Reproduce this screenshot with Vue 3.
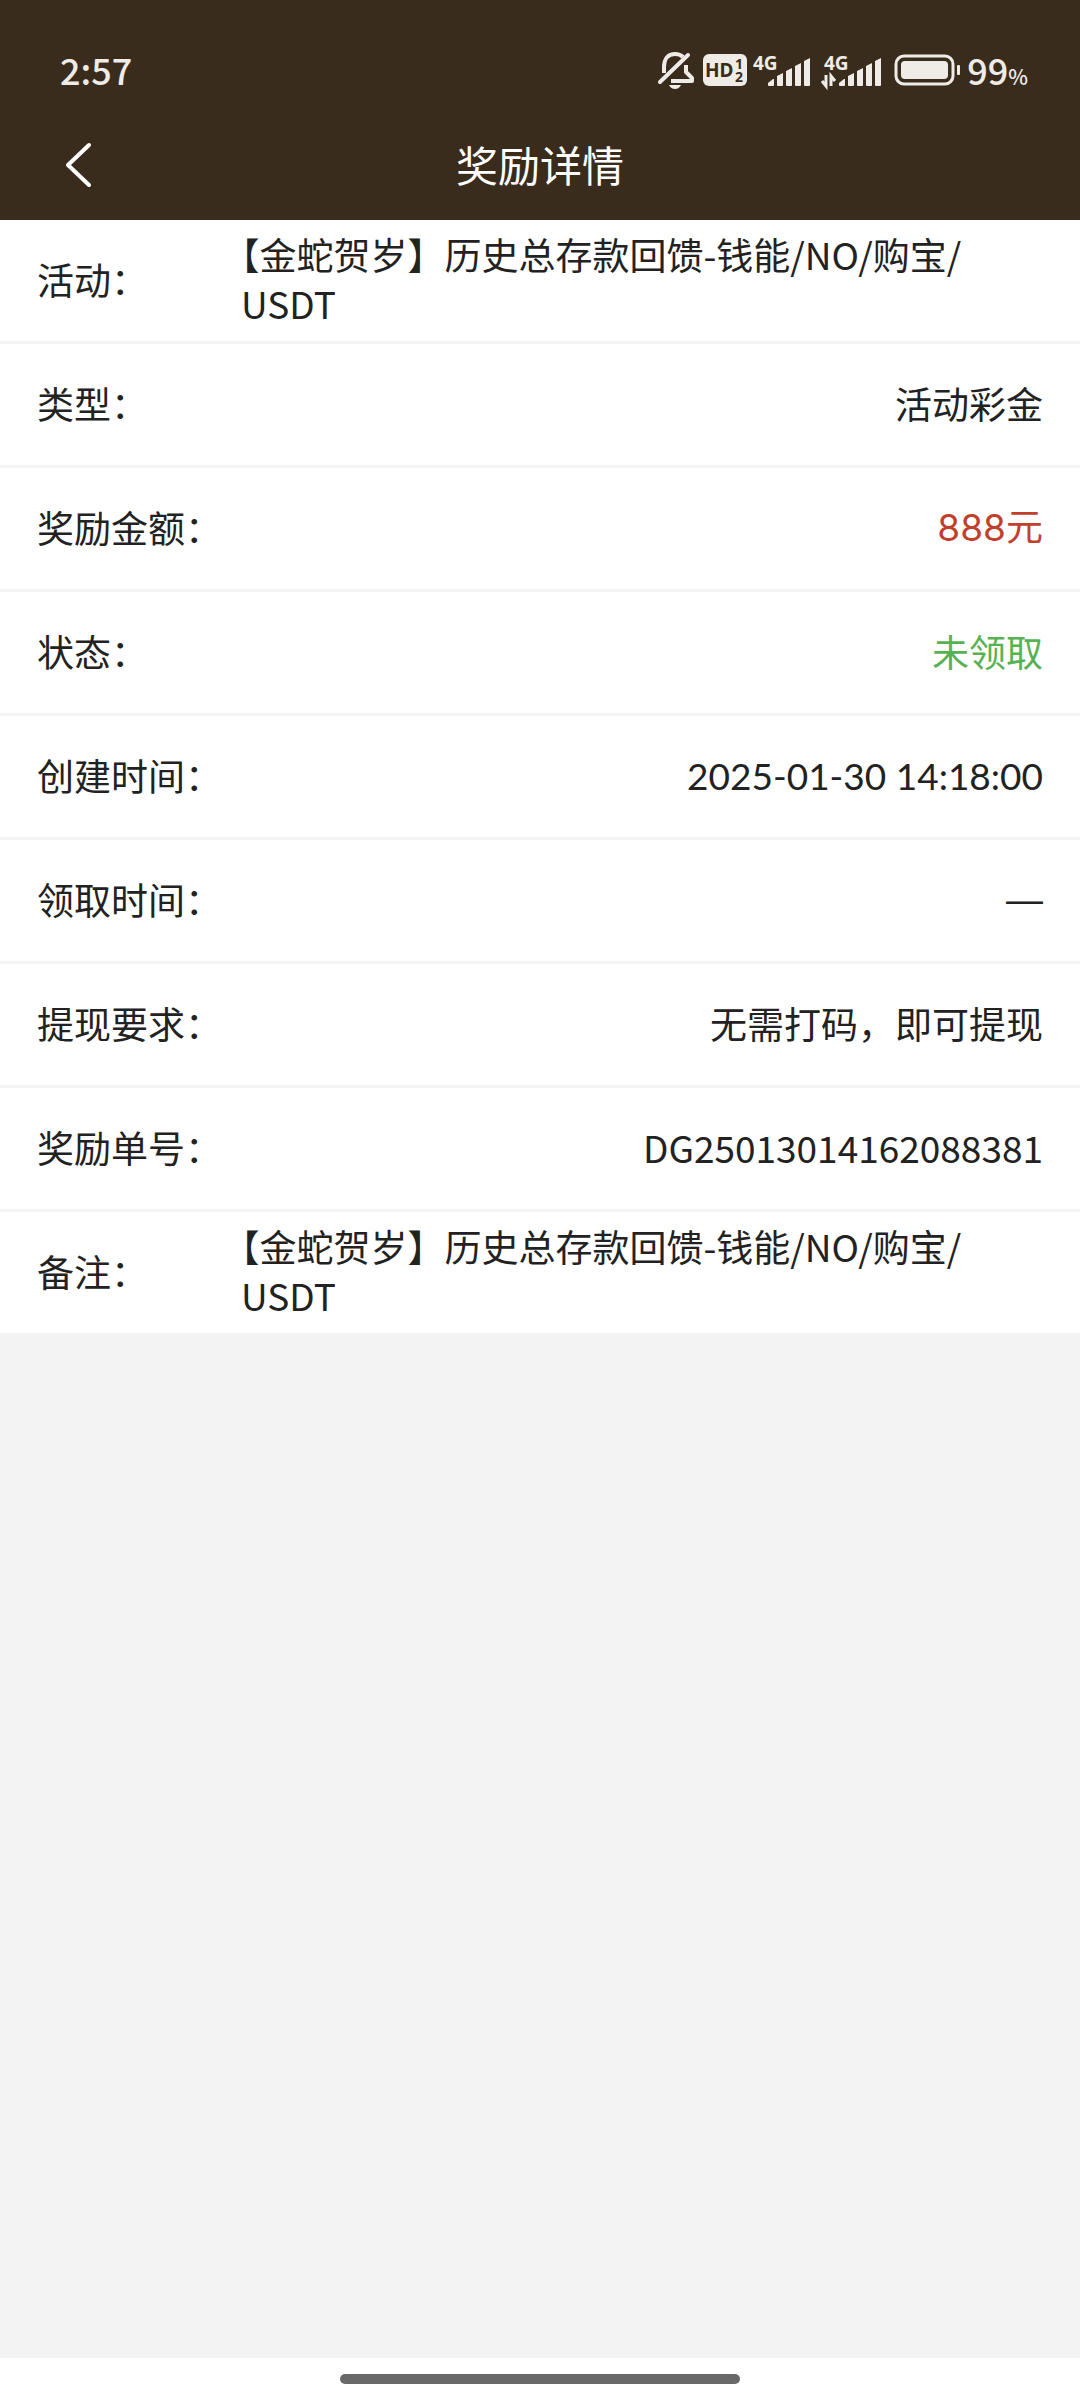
<template>
  <div class="page">
    <header class="header">
      <div class="status-bar">
        <span class="time">2:57</span>
        <div class="status-icons">
          <!-- 静音 -->
          <svg width="40" height="40" viewBox="0 0 40 40" role="img" aria-label="静音">
            <path
              d="M7 23 V17 C7 9 11 4 18 4 C21 4 24 5 26 7 M29 15 V22 L35 28 V31 H14"
              fill="none"
              stroke="#efebe7"
              stroke-width="4"
              stroke-linejoin="round"
            />
            <path d="M31 5 L3 32" fill="none" stroke="#efebe7" stroke-width="4" stroke-linecap="round" />
            <path d="M12 35 H24 Q22 39 18 39 Q14 39 12 35 Z" fill="#efebe7" />
          </svg>
          <!-- 高清通话 -->
          <svg width="44" height="32" viewBox="0 0 44 32" role="img" aria-label="HD 1 2">
            <rect width="44" height="32" rx="6" fill="#efebe7" />
            <text x="2" y="23" class="hd-text">HD</text>
            <text x="32" y="15" class="hd-num">1</text>
            <text x="32" y="28" class="hd-num">2</text>
          </svg>
          <svg
            v-for="card in simCards"
            :key="card.id"
            :width="card.width"
            height="44"
            :viewBox="`0 -4 ${card.width} 44`"
            role="img"
            :aria-label="`卡${card.id} 4G`"
          >
            <text :x="card.textX" y="18" class="net-text">4G</text>
            <g :transform="`translate(${card.barX} 0)`" fill="#efebe7">
              <path d="M0 33 V31 L5 27 H6 V33 Q6 34 5 34 H1 Q0 34 0 33 Z" />
              <path d="M9 24 L15 21 V33 Q15 34 14 34 H10 Q9 34 9 33 Z" />
              <path d="M18 19 L24 16 V33 Q24 34 23 34 H19 Q18 34 18 33 Z" />
              <path d="M27 14 L33 11 V33 Q33 34 32 34 H28 Q27 34 27 33 Z" />
              <path d="M36 9 L42 6 V33 Q42 34 41 34 H37 Q36 34 36 33 Z" />
            </g>
            <path
              v-if="card.active"
              d="M5 23 V34 L1 29 M10 34 V24 L14 29"
              fill="none"
              stroke="#efebe7"
              stroke-width="3"
            />
          </svg>
          <!-- 电池 -->
          <svg width="68" height="32" viewBox="0 0 68 32" role="img" aria-label="电量">
            <rect x="3" y="2" width="57" height="28" rx="8" fill="none" stroke="#efebe7" stroke-width="3" />
            <rect x="8" y="7" width="47" height="18" rx="4" fill="#efebe7" />
            <rect x="64" y="11" width="3" height="10" rx="1" fill="#efebe7" />
          </svg>
          <span class="battery-text">99<small>%</small></span>
        </div>
      </div>
      <nav class="nav-bar">
        <button class="back" type="button" aria-label="返回" @click="goBack">
          <svg width="28" height="46" viewBox="0 0 28 46" aria-hidden="true">
            <path
              d="M24 3 L3 23 L24 43"
              fill="none"
              stroke="#fff"
              stroke-width="4"
              stroke-linecap="round"
              stroke-linejoin="round"
            />
          </svg>
        </button>
        <h1 class="title">奖励详情</h1>
      </nav>
    </header>

    <main class="content">
      <dl class="detail-list">
        <div v-for="item in details" :key="item.label" class="row">
          <dt>{{ item.label }}：</dt>
          <dd :class="item.type">{{ item.value }}</dd>
        </div>
      </dl>
    </main>

    <footer class="home-bar">
      <div class="home-indicator"></div>
    </footer>
  </div>
</template>

<script setup>
import { ref } from 'vue'

// 双卡信号
const simCards = [
  { id: 1, width: 62, textX: 0, barX: 15, active: false },
  { id: 2, width: 66, textX: 3, barX: 18, active: true }
]

// 斜杠后允许换行
const activityName = '【金蛇贺岁】历史总存款回馈-钱能/NO/购宝/\u200BUSDT'

// 奖励详情
const details = ref([
  { label: '活动', value: activityName },
  { label: '类型', value: '活动彩金' },
  { label: '奖励金额', value: '888元', type: 'amount' },
  { label: '状态', value: '未领取', type: 'pending' },
  { label: '创建时间', value: '2025-01-30 14:18:00', type: 'datetime' },
  { label: '领取时间', value: '—', type: 'empty' },
  { label: '提现要求', value: '无需打码，即可提现' },
  { label: '奖励单号', value: 'DG25013014162088381' },
  { label: '备注', value: activityName }
])

// 返回上一页
const goBack = () => {
  window.history.back()
}
</script>

<style>
body {
  margin: 0;
}
</style>

<style scoped>
.page {
  display: flex;
  flex-direction: column;
  min-height: 100vh;
  background: #f3f3f3;
  color: #222;
  font-family: "Noto Sans CJK SC", sans-serif;
  font-size: 37px;
  line-height: 49px;
}

.header {
  background: #3a2c1d;
  color: #fff;
}

.status-bar {
  display: flex;
  align-items: center;
  justify-content: space-between;
  height: 110px;
  padding: 30px 52px 0 60px;
  box-sizing: border-box;
  color: #efebe7;
  font-size: 36px;
  font-weight: 500;
}

.status-icons {
  display: flex;
  align-items: center;
  gap: 6px;
}

.time,
.battery-text {
  padding-bottom: 2px;
}

.battery-text small {
  font-size: 21px;
  line-height: 1;
}

.hd-text {
  font: 700 19px "Noto Sans", sans-serif;
  fill: #3a2c1d;
}

.hd-num {
  font: 700 14px "Noto Sans", sans-serif;
  fill: #3a2c1d;
}

.net-text {
  font: 700 19px "Noto Sans", sans-serif;
  fill: #efebe7;
}

.nav-bar {
  display: grid;
  grid-template-columns: 120px 1fr 120px;
  align-items: center;
  height: 110px;
}

.back {
  display: flex;
  align-items: center;
  height: 110px;
  padding: 0 0 0 65px;
  border: 0;
  background: none;
  cursor: pointer;
}

.title {
  margin: 0;
  padding-bottom: 4px;
  font-size: 42px;
  font-weight: 400;
  text-align: center;
}

.content {
  flex: 1;
}

.detail-list {
  margin: 0;
}

.row {
  display: grid;
  grid-template-columns: 204px 1fr;
  align-items: center;
  min-height: 118px;
  padding: 0 37px 3px;
  border-bottom: 3px solid #f3f3f3;
  background: #fff;
}

dt {
  white-space: nowrap;
}

dd {
  justify-self: end;
  margin: 0;
  text-spacing-trim: trim-start;
}

.amount {
  color: #c13f2d;
  font-family: Inter, "Noto Sans CJK SC", sans-serif;
}

.pending {
  color: #56b253;
}

.datetime {
  font-family: Lato, "Noto Sans CJK SC", sans-serif;
}

.empty {
  font-family: "Liberation Sans", sans-serif;
}

.home-bar {
  display: flex;
  justify-content: center;
  height: 42px;
  padding-top: 16px;
  box-sizing: border-box;
  background: #fff;
}

.home-indicator {
  width: 37%;
  height: 10px;
  border-radius: 5px;
  background: #696969;
}
</style>
